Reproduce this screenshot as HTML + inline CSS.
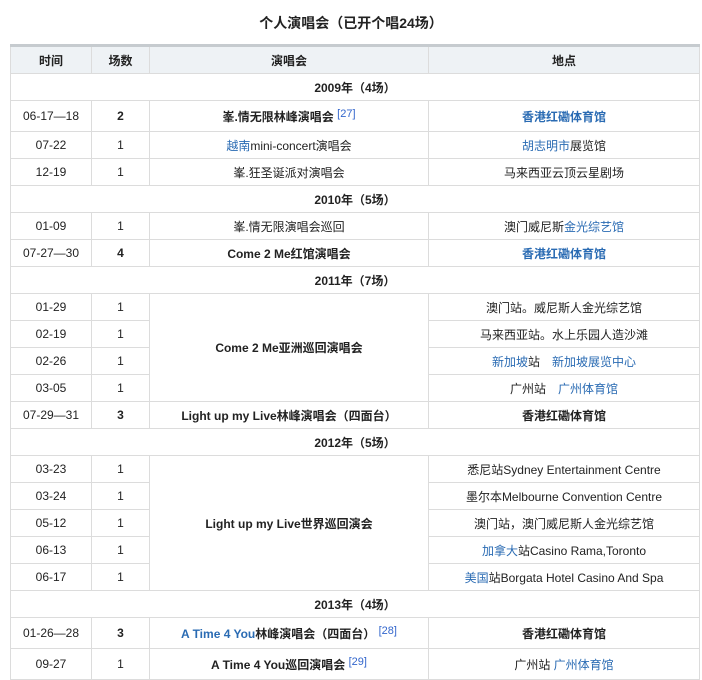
<!DOCTYPE html>
<html><head><meta charset="utf-8"><style>
body{margin:0;background:#fff;font-family:"Liberation Sans","Noto Sans CJK SC",sans-serif;font-size:12px;color:#222;}
.t{position:absolute;left:0;top:13px;width:702px;text-align:center;font-weight:bold;font-size:14px;}
table{position:absolute;left:10px;top:44px;width:689px;border-collapse:collapse;table-layout:fixed;}
td,th{border:1px solid #dcdcdc;text-align:center;padding:0;height:26px;}
th{background:#eef2f5;font-weight:bold;height:26px;border-top:3px solid #c6cbcf;}
.y td{font-weight:bold;}
b{font-weight:bold}
a{color:#2a6bb3;text-decoration:none}
sup{color:#3366cc;font-size:11px;font-weight:normal;position:relative;top:1px}
.tall td{height:30px}
.last td{height:30px}
</style></head><body>
<div class="t">个人演唱会（已开个唱24场）</div>
<table>
<colgroup><col style="width:81px"><col style="width:58px"><col style="width:279px"><col style="width:271px"></colgroup>
<tr><th>时间</th><th>场数</th><th>演唱会</th><th>地点</th></tr>
<tr class="y"><td colspan="4">2009年（4场）</td></tr>
<tr class="tall"><td>06-17—18</td><td><b>2</b></td><td><b>峯.情无限林峰演唱会</b> <sup>[27]</sup></td><td><b><a>香港红磡体育馆</a></b></td></tr>
<tr><td>07-22</td><td>1</td><td><a>越南</a>mini-concert演唱会</td><td><a>胡志明市</a>展览馆</td></tr>
<tr><td>12-19</td><td>1</td><td>峯.狂圣诞派对演唱会</td><td>马来西亚云顶云星剧场</td></tr>
<tr class="y"><td colspan="4">2010年（5场）</td></tr>
<tr><td>01-09</td><td>1</td><td>峯.情无限演唱会巡回</td><td>澳门威尼斯<a>金光综艺馆</a></td></tr>
<tr><td>07-27—30</td><td><b>4</b></td><td><b>Come 2 Me红馆演唱会</b></td><td><b><a>香港红磡体育馆</a></b></td></tr>
<tr class="y"><td colspan="4">2011年（7场）</td></tr>
<tr><td>01-29</td><td>1</td><td rowspan="4"><b>Come 2 Me亚洲巡回演唱会</b></td><td>澳门站。威尼斯人金光综艺馆</td></tr>
<tr><td>02-19</td><td>1</td><td>马来西亚站。水上乐园人造沙滩</td></tr>
<tr><td>02-26</td><td>1</td><td><a>新加坡</a>站　<a>新加坡展览中心</a></td></tr>
<tr><td>03-05</td><td>1</td><td>广州站　<a>广州体育馆</a></td></tr>
<tr><td>07-29—31</td><td><b>3</b></td><td><b>Light up my Live林峰演唱会（四面台）</b></td><td><b>香港红磡体育馆</b></td></tr>
<tr class="y"><td colspan="4">2012年（5场）</td></tr>
<tr><td>03-23</td><td>1</td><td rowspan="5"><b>Light up my Live世界巡回演会</b></td><td>悉尼站Sydney Entertainment Centre</td></tr>
<tr><td>03-24</td><td>1</td><td>墨尔本Melbourne Convention Centre</td></tr>
<tr><td>05-12</td><td>1</td><td>澳门站，澳门威尼斯人金光综艺馆</td></tr>
<tr><td>06-13</td><td>1</td><td><a>加拿大</a>站Casino Rama,Toronto</td></tr>
<tr><td>06-17</td><td>1</td><td><a>美国</a>站Borgata Hotel Casino And Spa</td></tr>
<tr class="y"><td colspan="4">2013年（4场）</td></tr>
<tr class="tall"><td>01-26—28</td><td><b>3</b></td><td><b><a>A Time 4 You</a>林峰演唱会（四面台）</b> <sup>[28]</sup></td><td><b>香港红磡体育馆</b></td></tr>
<tr class="last"><td>09-27</td><td>1</td><td><b>A Time 4 You巡回演唱会</b> <sup>[29]</sup></td><td>广州站 <a>广州体育馆</a></td></tr>
</table>
</body></html>
